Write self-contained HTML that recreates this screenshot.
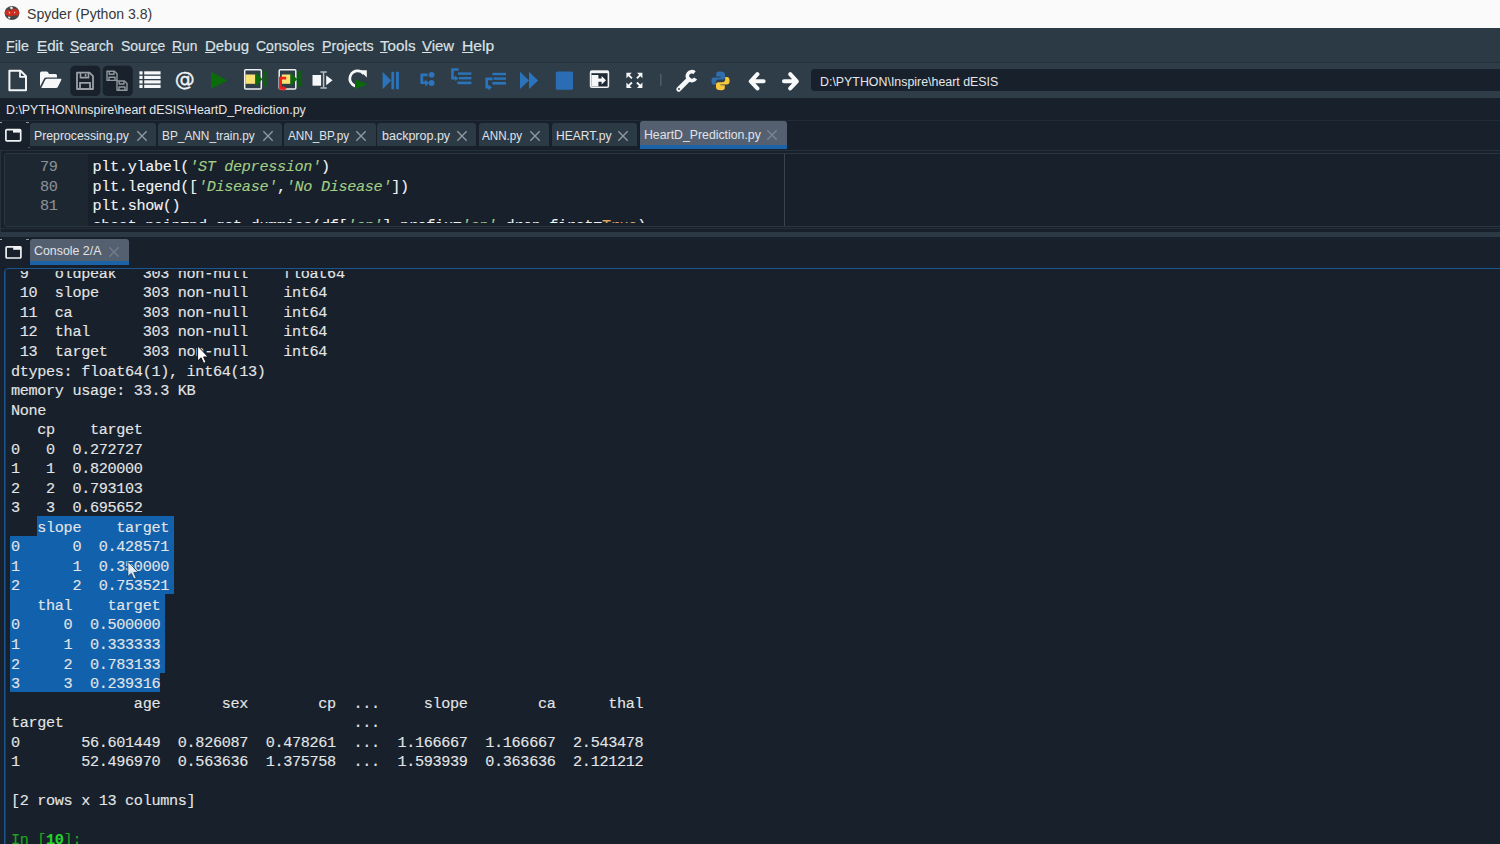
<!DOCTYPE html>
<html>
<head>
<meta charset="utf-8">
<title>Spyder (Python 3.8)</title>
<style>
*{box-sizing:border-box;margin:0;padding:0}
html,body{width:1500px;height:844px;overflow:hidden;background:#18212b}
body{position:relative;font-family:"Liberation Sans",sans-serif;color:#e8ecef}
.abs{position:absolute}
.tx{position:absolute;white-space:pre;line-height:18px;transform-origin:0 50%;display:block}
.tx u{text-decoration:underline;text-decoration-thickness:1px;text-underline-offset:1.2px}
#title{left:0;top:0;width:1500px;height:28px;background:#fafafa}
#l120{left:0;top:120.2px;width:1500px;height:1.2px;background:#212c36}
#menu{left:0;top:28px;width:1500px;height:34px;background:#2b3a45}
#tool{left:0;top:61.5px;width:1500px;height:36px;background:#2e3d48;border-top:1px solid #24313b}
#pathbox{left:810.5px;top:68.5px;width:700px;height:22.7px;background:#18212b;border-radius:4px}
.tab{position:absolute;top:123.3px;height:23px;background:#2c3a45;border-radius:3px 3px 0 0}
.tab.sel{background:#545f70;top:121px;height:27.6px;border-bottom:4px solid #1c62a6;border-radius:3px 3px 0 0}
#editor{left:4px;top:153px;width:1500px;height:74px;background:#18212b;border:1px solid #2a3640;border-radius:3px;overflow:hidden}
#gutter{left:0;top:0;width:82.5px;height:80px;background:#1d2732}
#edge{left:779px;top:0;width:1px;height:80px;background:#38444e}
#edclip{left:0;top:0;width:1500px;height:68.6px;overflow:hidden}
.el{position:absolute;left:0;white-space:pre;-webkit-text-stroke:0.1px;font-family:"Liberation Mono","DejaVu Sans Mono",monospace;font-size:15.2px;line-height:19.535px;letter-spacing:-0.33px;color:#f2f4f5}
.el .n{position:absolute;left:35px;color:#8a9096}
.el .c{position:absolute;left:87.5px}
.el i{color:#a3ce86}
.el .b{color:#e5a563}
#split{left:0;top:231.5px;width:1500px;height:5px;background:#2b3945}
#split0{left:0;top:227.6px;width:1500px;height:1px;background:#232f39}
#tabline{left:0;top:149.8px;width:1500px;height:1px;background:#25313b}
#console{left:3.6px;top:268.4px;width:1500px;height:590px;border:1.6px solid #1b5690;border-radius:4px;background:#18212b;overflow:hidden}
#cclip{left:0;top:1.6px;width:1500px;height:590px;overflow:hidden}
.cl{position:absolute;left:6.3px;-webkit-text-stroke:0.12px;white-space:pre;font-family:"Liberation Mono","DejaVu Sans Mono",monospace;font-size:15.2px;line-height:19.535px;height:19.535px;letter-spacing:-0.33px;color:#e3e5e7}
.cl .g{color:#1ba51f}
.cl .g b{color:#25d42a}
.sel{position:absolute;background:#1261ac}
</style>
</head>
<body>
<div id="title" class="abs"></div><div id="l120" class="abs"></div>
<div id="menu" class="abs"></div>
<div id="tool" class="abs"></div>
<div id="pathbox" class="abs"></div>
<svg class="abs" style="left:0;top:60px" width="830" height="44" viewBox="0 60 830 44">
<!-- new file -->
<path d="M9.4 70.8H20.5L26 76.3V90.3H9.4Z" fill="none" stroke="#f4f5f6" stroke-width="2" stroke-linejoin="round"/>
<path d="M20 70.8V76.8H26" fill="none" stroke="#f4f5f6" stroke-width="1.8" stroke-linejoin="round"/>
<!-- open folder -->
<path d="M40 86.5V73.2Q40 71.6 41.6 71.6H46.5Q47.6 71.6 48.2 72.6L49 74H55.4Q57 74 57 75.6V77.4H46.2Q44.6 77.4 44 78.8Z" fill="#f6f7f8"/>
<path d="M41.2 88L45.3 79.8Q45.8 78.8 47 78.8H60.5Q61.9 78.8 61.3 80L57.8 87Q57.3 88 56.1 88Z" fill="#f6f7f8"/>
<!-- save (disabled) -->
<rect x="70.3" y="65.8" width="30" height="30.2" rx="4.5" fill="#19222c"/>
<path d="M77 72.7H89.5L93 76.2V89H77Z" fill="none" stroke="#9aa0a6" stroke-width="1.8" stroke-linejoin="round"/>
<path d="M80.5 73V77.6H88.5V73M85.6 74V76.6" fill="none" stroke="#9aa0a6" stroke-width="1.6"/>
<path d="M80 89V82.8H90V89" fill="none" stroke="#9aa0a6" stroke-width="1.8"/>
<!-- save all (disabled) -->
<rect x="102.8" y="65.8" width="30" height="30.2" rx="4.5" fill="#19222c"/>
<g fill="none" stroke="#90979d" stroke-width="1.4" stroke-linejoin="round">
<path d="M107 71.2H114.5L117 73.7V80.4H107Z"/><path d="M109.2 71.4V74.2H114V71.4M109 80.4V77.2H115V80.4"/>
<path d="M117 81H124.5L127 83.5V90.2H117Z"/><path d="M119.2 81.2V84H124V81.2M119 90.2V87H125V90.2"/>
</g>
<!-- list -->
<g fill="#f6f7f8">
<rect x="139.4" y="71.3" width="3.2" height="3.2"/><rect x="144.2" y="71.3" width="16.4" height="3.2"/>
<rect x="139.4" y="75.8" width="3.2" height="3.2"/><rect x="144.2" y="75.8" width="16.4" height="3.2"/>
<rect x="139.4" y="80.3" width="3.2" height="3.2"/><rect x="144.2" y="80.3" width="16.4" height="3.2"/>
<rect x="139.4" y="84.8" width="3.2" height="3.2"/><rect x="144.2" y="84.8" width="16.4" height="3.2"/>
</g>
<!-- @ -->
<text x="184.7" y="86" style="font-family:'DejaVu Sans','Liberation Sans',sans-serif;font-weight:normal" font-size="20" text-anchor="middle" stroke="#f2f3f4" stroke-width="0.35" fill="#f2f3f4">@</text>
<!-- run -->
<path d="M211 71.8L227.6 80.4L211 89Z" fill="#0a6c0a"/>
<!-- run cell -->
<rect x="244.7" y="69.7" width="16.6" height="19.4" rx="1" fill="none" stroke="#eef0f1" stroke-width="1.5"/>
<rect x="245.4" y="74.5" width="9.8" height="9.3" fill="#f7e273"/>
<path d="M255.6 72.2L262.4 79.2L255.6 86.2Z" fill="#0c6a0c"/><rect x="263" y="70.8" width="3.6" height="16" fill="#0d5d12"/>
<!-- run cell and advance -->
<rect x="279.2" y="69.7" width="16.6" height="19.4" rx="1" fill="none" stroke="#eef0f1" stroke-width="1.5"/>
<rect x="281.8" y="74.5" width="8.8" height="9.3" fill="#f7e273"/>
<path d="M290.4 72.2L297.2 79.2L290.4 86.2Z" fill="#0c6a0c"/><rect x="297.8" y="70.8" width="3.6" height="16" fill="#0d5d12"/>
<path d="M286.2 78.1H280.4V88.5H283.4" fill="none" stroke="#f0201a" stroke-width="2.7"/><path d="M282.8 85.6L286.6 88.5L282.8 91.4Z" fill="#f0201a"/>
<!-- run selection -->
<rect x="312.5" y="75" width="8.6" height="10.7" fill="#f6f7f8"/>
<path d="M320.4 71.9H322.6M324.6 71.9H326.8M320.4 87.9H322.6M324.6 87.9H326.8M323.6 72V87.8" stroke="#b8bec3" stroke-width="1.5" fill="none"/>
<path d="M322.4 71.9H324.8M322.4 87.9H324.8" stroke="#b8bec3" stroke-width="1.5"/>
<path d="M326.2 75.4L332.6 80.3L326.2 85.2Z" fill="#f6f7f8"/>
<!-- re-run -->
<path d="M358.2 86.4A7.8 7.8 0 1 1 363.8 73.8" fill="none" stroke="#f6f7f8" stroke-width="2.7"/>
<path d="M359.6 70.2H366.8V77.4Z" fill="#f6f7f8"/>
<path d="M355 79.2L367.6 84.2L355 89.4Z" fill="#0a6a0a"/>
<!-- debug -->
<g fill="#2b74bb">
<path d="M382.6 71.8L391.2 80.5L382.6 89.2Z"/><rect x="391.4" y="71.8" width="2.7" height="17.4"/><rect x="396" y="71.8" width="2.9" height="17.4"/>
</g>
<!-- step -->
<g fill="#2b74bb" stroke="none">
<path d="M427.6 73.6H420.4V84H425.2V86.4L429.2 83L425.2 79.6V81.4H423.2V76.2H427.6Z"/>
<circle cx="431.6" cy="74.8" r="2.9"/><circle cx="431.6" cy="83" r="2.9"/>
</g>
<!-- step into -->
<g fill="#2b74bb">
<path d="M458.6 68.2H451.2V79.4H455V81L458.4 78.4L455 75.6V77H453.8V70.8H458.6Z"/>
<rect x="458" y="72.4" width="13.4" height="2.4"/><rect x="458.8" y="77" width="12.6" height="2.4"/><rect x="457.4" y="81.6" width="14" height="2.6"/>
</g>
<!-- step return -->
<g fill="#2b74bb">
<rect x="492.4" y="72.8" width="13.6" height="2.4"/><rect x="493.6" y="77.4" width="12.4" height="2.4"/><rect x="492.4" y="82" width="13.6" height="2.6"/>
<path d="M492.6 77.6H485.4V88.4H488.4V90.2L492 87.4L488.4 84.6V86H488V80.2H492.6Z"/>
</g>
<!-- continue -->
<path d="M520 71.8L529 80.4L520 89ZM529 71.8L538.2 80.4L529 89Z" fill="#2b74bb"/>
<!-- stop -->
<rect x="555.8" y="71.4" width="17.2" height="18.4" rx="1.6" fill="#2a6db5"/>
<!-- maximize pane -->
<rect x="590.6" y="71.2" width="17.8" height="16" rx="1.2" fill="#1f2a34" stroke="#f2f3f4" stroke-width="1.6"/>
<rect x="590.6" y="70.6" width="17.8" height="2.6" fill="#f2f3f4"/>
<rect x="591.4" y="75" width="7" height="11.4" fill="#f6f7f8"/>
<path d="M598 78.6H601.6V76L606 80.2L601.6 84.4V81.8H598Z" fill="#f6f7f8"/>
<!-- fullscreen -->
<g stroke="#f6f7f8" stroke-width="1.9" fill="#f6f7f8">
<path d="M628 74.4L631.9 78.3M640.8 74.4L636.9 78.3M628 86.4L631.9 82.5M640.8 86.4L636.9 82.5" fill="none"/>
<path d="M626.4 72.8H631.8L626.4 78.2ZM642.4 72.8V78.2L637 72.8ZM626.4 88V82.6L631.8 88ZM642.4 88H637L642.4 82.6Z" stroke="none"/>
</g>
<!-- separator -->
<rect x="660" y="73.8" width="1.6" height="12" fill="#4e5b66"/>
<!-- wrench -->
<path d="M678.7 89.3L688.6 79.4" stroke="#f6f7f8" stroke-width="4.8" stroke-linecap="round" fill="none"/>
<path d="M694.6 72.6A4.5 4.5 0 1 0 695.6 78.6" fill="none" stroke="#f6f7f8" stroke-width="3.6"/>
<circle cx="679" cy="89" r="0.9" fill="#2e3d48"/>
<!-- python -->
<path d="M720.2 71.6C716.6 71.6 716.2 73 716.2 74.4V76.6H720.6V77.4H713.8C711.8 77.4 711.4 79.4 711.4 81C711.4 82.8 712 84.8 714 84.8H715.8V82.4C715.8 80.8 717 79.6 718.6 79.6H722.8C724.2 79.6 725 78.6 725 77.4V74.4C725 72.8 723.6 71.6 720.2 71.6Z" fill="#2f6eaf"/>
<path d="M720.8 90.2C724.4 90.2 724.8 88.8 724.8 87.4V85.2H720.4V84.4H727.2C729.2 84.4 729.6 82.4 729.6 80.8C729.6 79 729 77 727 77H725.2V79.4C725.2 81 724 82.2 722.4 82.2H718.2C716.8 82.2 716 83.2 716 84.4V87.4C716 89 717.4 90.2 720.8 90.2Z" fill="#f6c83c"/>
<!-- back -->
<path d="M757.4 74.2L750.8 81.3L757.4 88.4M751.4 81.3H763.6" fill="none" stroke="#f8f9f9" stroke-width="4.1" stroke-linejoin="round" stroke-linecap="round"/>
<!-- forward -->
<path d="M790.2 74.2L796.8 81.3L790.2 88.4M796.2 81.3H784" fill="none" stroke="#f8f9f9" stroke-width="4.1" stroke-linejoin="round" stroke-linecap="round"/>
</svg>
<!-- tab browse buttons -->
<svg class="abs" style="left:0;top:120px" width="30" height="30" viewBox="0 120 30 30"><rect x="5.9" y="129.6" width="14.8" height="11.2" rx="1" fill="none" stroke="#f0f1f2" stroke-width="1.7"/><rect x="13" y="129" width="8" height="3.6" fill="#f0f1f2"/></svg>
<svg class="abs" style="left:0;top:236px" width="30" height="30" viewBox="0 236 30 30"><rect x="6.1" y="246.8" width="14.8" height="11.2" rx="1" fill="none" stroke="#f0f1f2" stroke-width="1.7"/><rect x="13.2" y="246.2" width="8" height="3.6" fill="#f0f1f2"/></svg>
<!-- spyder title icon -->
<svg class="abs" style="left:3px;top:4px" width="19" height="18" viewBox="3 4 19 18"><ellipse cx="12" cy="13" rx="7.4" ry="6.9" fill="#474747"/><path d="M4.7 12.2L7.4 9.4L11 10.6L13.4 8.6L17.6 9.6L19.5 12.8L17.8 15.8L13.8 15.2L11.6 16.6L7.6 15.6L5 14.6Z" fill="#cf2a1e"/><path d="M9.6 7.4L12 6.6L13.2 8.2L11.2 9.6ZM8.2 16.4L10.6 17L9.8 18.8L8 18Z" fill="#e9e9e9"/><path d="M8.6 11.6L10.4 12.4L9.2 14ZM14.2 11.4L15.6 12.6L14 13.4Z" fill="#f3d6d0"/></svg>

<div class="tab" style="left:30.4px;width:125.6px"></div>
<svg class="abs" style="left:135.6px;top:130px" width="12" height="12" viewBox="0 0 12 12"><path d="M1.3 1.3L10.7 10.7M10.7 1.3L1.3 10.7" stroke="#8f989f" stroke-width="1.4" fill="none"/></svg>
<div class="tab" style="left:158.0px;width:124.0px"></div>
<svg class="abs" style="left:262.0px;top:130px" width="12" height="12" viewBox="0 0 12 12"><path d="M1.3 1.3L10.7 10.7M10.7 1.3L1.3 10.7" stroke="#8f989f" stroke-width="1.4" fill="none"/></svg>
<div class="tab" style="left:284.0px;width:91.5px"></div>
<svg class="abs" style="left:355.4px;top:130px" width="12" height="12" viewBox="0 0 12 12"><path d="M1.3 1.3L10.7 10.7M10.7 1.3L1.3 10.7" stroke="#8f989f" stroke-width="1.4" fill="none"/></svg>
<div class="tab" style="left:377.3px;width:98.7px"></div>
<svg class="abs" style="left:456.0px;top:130px" width="12" height="12" viewBox="0 0 12 12"><path d="M1.3 1.3L10.7 10.7M10.7 1.3L1.3 10.7" stroke="#8f989f" stroke-width="1.4" fill="none"/></svg>
<div class="tab" style="left:478.7px;width:70.6px"></div>
<svg class="abs" style="left:529.0px;top:130px" width="12" height="12" viewBox="0 0 12 12"><path d="M1.3 1.3L10.7 10.7M10.7 1.3L1.3 10.7" stroke="#8f989f" stroke-width="1.4" fill="none"/></svg>
<div class="tab" style="left:551.5px;width:85.5px"></div>
<svg class="abs" style="left:617.0px;top:130px" width="12" height="12" viewBox="0 0 12 12"><path d="M1.3 1.3L10.7 10.7M10.7 1.3L1.3 10.7" stroke="#8f989f" stroke-width="1.4" fill="none"/></svg>
<div class="tab sel" style="left:640.0px;width:146.7px"></div>
<svg class="abs" style="left:766.2px;top:129px" width="12" height="12" viewBox="0 0 12 12"><path d="M1.3 1.3L10.7 10.7M10.7 1.3L1.3 10.7" stroke="#7b8590" stroke-width="1.4" fill="none"/></svg>
<div class="abs" style="left:0;top:122px;width:2.4px;height:1.3px;background:#9aa3ab"></div><div class="abs" style="left:26px;top:122px;width:3.4px;height:1.3px;background:#8c959d"></div><div class="abs" style="left:27.5px;top:147px;width:2.4px;height:1.2px;background:#4b5760"></div>
<div class="abs" style="left:0;top:239px;width:2.4px;height:1.3px;background:#9aa3ab"></div><div class="abs" style="left:25.6px;top:239px;width:3.4px;height:1.3px;background:#8c959d"></div>
<div id="editor" class="abs">
<div id="gutter" class="abs"></div>
<div id="edge" class="abs"></div>
<div id="edclip" class="abs">
<div class="el" style="top:4.1px"><span class="n">79</span><span class="c">plt.ylabel(<i>'ST depression'</i>)</span></div>
<div class="el" style="top:23.63px"><span class="n">80</span><span class="c">plt.legend([<i>'Disease'</i>,<i>'No Disease'</i>])</span></div>
<div class="el" style="top:43.17px"><span class="n">81</span><span class="c">plt.show()</span></div>
<div class="el" style="top:62.7px"><span class="c">chest_pain=pd.get_dummies(df[<i>'cp'</i>],prefix=<i>'cp'</i>,drop_first=<span class="b">True</span>)</span></div>
</div>
</div>
<div id="split0" class="abs"></div><div id="split" class="abs"></div><div id="tabline" class="abs"></div><div class="abs" style="left:0;top:149.8px;width:1.2px;height:82px;background:#25313b"></div>
<div class="tab sel" style="left:30.4px;width:98.6px;top:238.5px;height:26.2px;border-bottom-width:4.6px"></div>
<svg class="abs" style="left:108.2px;top:246.2px" width="12" height="12" viewBox="0 0 12 12"><path d="M1.3 1.3L10.7 10.7M10.7 1.3L1.3 10.7" stroke="#737c8a" stroke-width="1.4" fill="none"/></svg>
<div id="console" class="abs"><div id="cclip" class="abs">
<div class="abs" style="left:0;top:0;width:1.5px;height:600px;background:#1a3a5e"></div>
<div class="sel" style="left:32.2px;top:245.12px;width:136.8px;height:19.79px"></div>
<div class="sel" style="left:5.5px;top:264.65px;width:163.5px;height:19.79px"></div>
<div class="sel" style="left:5.5px;top:284.19px;width:163.5px;height:19.79px"></div>
<div class="sel" style="left:5.5px;top:303.72px;width:163.5px;height:19.79px"></div>
<div class="sel" style="left:5.5px;top:323.26px;width:154.7px;height:19.79px"></div>
<div class="sel" style="left:5.5px;top:342.79px;width:154.7px;height:19.79px"></div>
<div class="sel" style="left:5.5px;top:362.33px;width:154.7px;height:19.79px"></div>
<div class="sel" style="left:5.5px;top:381.86px;width:154.7px;height:19.79px"></div>
<div class="sel" style="left:5.5px;top:401.40px;width:150.1px;height:19.79px"></div>
<div class="cl" style="top:-6.14px"> 9   oldpeak   303 non-null    float64</div>
<div class="cl" style="top:13.40px"> 10  slope     303 non-null    int64</div>
<div class="cl" style="top:32.94px"> 11  ca        303 non-null    int64</div>
<div class="cl" style="top:52.47px"> 12  thal      303 non-null    int64</div>
<div class="cl" style="top:72.00px"> 13  target    303 non-null    int64</div>
<div class="cl" style="top:91.54px">dtypes: float64(1), int64(13)</div>
<div class="cl" style="top:111.07px">memory usage: 33.3 KB</div>
<div class="cl" style="top:130.61px">None</div>
<div class="cl" style="top:150.14px">   cp    target</div>
<div class="cl" style="top:169.68px">0   0  0.272727</div>
<div class="cl" style="top:189.21px">1   1  0.820000</div>
<div class="cl" style="top:208.75px">2   2  0.793103</div>
<div class="cl" style="top:228.28px">3   3  0.695652</div>
<div class="cl" style="top:247.82px">   slope    target</div>
<div class="cl" style="top:267.36px">0      0  0.428571</div>
<div class="cl" style="top:286.89px">1      1  0.350000</div>
<div class="cl" style="top:306.42px">2      2  0.753521</div>
<div class="cl" style="top:325.96px">   thal    target</div>
<div class="cl" style="top:345.50px">0     0  0.500000</div>
<div class="cl" style="top:365.03px">1     1  0.333333</div>
<div class="cl" style="top:384.56px">2     2  0.783133</div>
<div class="cl" style="top:404.10px">3     3  0.239316</div>
<div class="cl" style="top:423.63px">              age       sex        cp  ...     slope        ca      thal</div>
<div class="cl" style="top:443.17px">target                                 ...</div>
<div class="cl" style="top:462.71px">0       56.601449  0.826087  0.478261  ...  1.166667  1.166667  2.543478</div>
<div class="cl" style="top:482.24px">1       52.496970  0.563636  1.375758  ...  1.593939  0.363636  2.121212</div>
<div class="cl" style="top:521.31px">[2 rows x 13 columns]</div>
<div class="cl" style="top:560.38px"><span class="g">In [<b>10</b>]:</span></div>
</div></div>
<span class="tx" style="left:26.6px;top:5px;font-size:15.3px;color:#383838;transform:scaleX(0.9210);">Spyder (Python 3.8)</span>
<span class="tx" style="left:6.3px;top:36.5px;font-size:15.3px;color:#dbe1e5;transform:scaleX(0.9288);-webkit-text-stroke:0.2px;"><u>F</u>ile</span>
<span class="tx" style="left:36.9px;top:36.5px;font-size:15.3px;color:#dbe1e5;transform:scaleX(0.9940);-webkit-text-stroke:0.2px;"><u>E</u>dit</span>
<span class="tx" style="left:70.3px;top:36.5px;font-size:15.3px;color:#dbe1e5;transform:scaleX(0.8954);-webkit-text-stroke:0.2px;"><u>S</u>earch</span>
<span class="tx" style="left:120.9px;top:36.5px;font-size:15.3px;color:#dbe1e5;transform:scaleX(0.9140);-webkit-text-stroke:0.2px;">Sour<u>c</u>e</span>
<span class="tx" style="left:172.4px;top:36.5px;font-size:15.3px;color:#dbe1e5;transform:scaleX(0.9016);-webkit-text-stroke:0.2px;"><u>R</u>un</span>
<span class="tx" style="left:204.9px;top:36.5px;font-size:15.3px;color:#dbe1e5;transform:scaleX(0.9761);-webkit-text-stroke:0.2px;"><u>D</u>ebug</span>
<span class="tx" style="left:256.1px;top:36.5px;font-size:15.3px;color:#dbe1e5;transform:scaleX(0.9141);-webkit-text-stroke:0.2px;">C<u>o</u>nsoles</span>
<span class="tx" style="left:321.6px;top:36.5px;font-size:15.3px;color:#dbe1e5;transform:scaleX(0.9337);-webkit-text-stroke:0.2px;"><u>P</u>rojects</span>
<span class="tx" style="left:379.6px;top:36.5px;font-size:15.3px;color:#dbe1e5;transform:scaleX(0.9939);-webkit-text-stroke:0.2px;"><u>T</u>ools</span>
<span class="tx" style="left:422.3px;top:36.5px;font-size:15.3px;color:#dbe1e5;transform:scaleX(0.9760);-webkit-text-stroke:0.2px;"><u>V</u>iew</span>
<span class="tx" style="left:461.5px;top:36.5px;font-size:15.3px;color:#dbe1e5;transform:scaleX(1.0232);-webkit-text-stroke:0.2px;"><u>H</u>elp</span>
<span class="tx" style="left:5.6px;top:101px;font-size:12.5px;color:#e4e7ea;transform:scaleX(0.9920);">D:\PYTHON\Inspire\heart dESIS\HeartD_Prediction.py</span>
<span class="tx" style="left:819.6px;top:73px;font-size:12.5px;color:#e4e7ea;transform:scaleX(0.9909);">D:\PYTHON\Inspire\heart dESIS</span>
<span class="tx" style="left:34.3px;top:127px;font-size:12.5px;color:#e0e4e8;transform:scaleX(0.9826);">Preprocessing.py</span>
<span class="tx" style="left:162.3px;top:127px;font-size:12.5px;color:#e0e4e8;transform:scaleX(0.9472);">BP_ANN_train.py</span>
<span class="tx" style="left:288.1px;top:127px;font-size:12.5px;color:#e0e4e8;transform:scaleX(0.9386);">ANN_BP.py</span>
<span class="tx" style="left:381.6px;top:127px;font-size:12.5px;color:#e0e4e8;transform:scaleX(0.9999);">backprop.py</span>
<span class="tx" style="left:482.3px;top:127px;font-size:12.5px;color:#e0e4e8;transform:scaleX(0.9309);">ANN.py</span>
<span class="tx" style="left:555.6px;top:127px;font-size:12.5px;color:#e0e4e8;transform:scaleX(0.9663);">HEART.py</span>
<span class="tx" style="left:643.6px;top:126px;font-size:12.5px;color:#e0e4e8;transform:scaleX(0.9831);">HeartD_Prediction.py</span>
<span class="tx" style="left:34.3px;top:241.8px;font-size:12.5px;color:#e0e4e8;transform:scaleX(0.9896);">Console 2/A</span>
<svg class="abs" style="left:190px;top:340px" width="30" height="30" viewBox="190 340 30 30"><path transform="translate(197.6 345.8)" d="M0 0L0 15.2L3.5 12L6.1 17.6L8.5 16.5L6 11.2L10.6 11.2Z" fill="#fff" stroke="#0c1117" stroke-width="1"/></svg>
<svg class="abs" style="left:120px;top:555px" width="30" height="30" viewBox="120 555 30 30"><path transform="translate(127.8 561.4)" d="M0 0L0 15.2L3.5 12L6.1 17.6L8.5 16.5L6 11.2L10.6 11.2Z" fill="#e8f2fb" fill-opacity="0.92" stroke="#0b2f55" stroke-opacity="0.8" stroke-width="1"/></svg>
</body>
</html>
